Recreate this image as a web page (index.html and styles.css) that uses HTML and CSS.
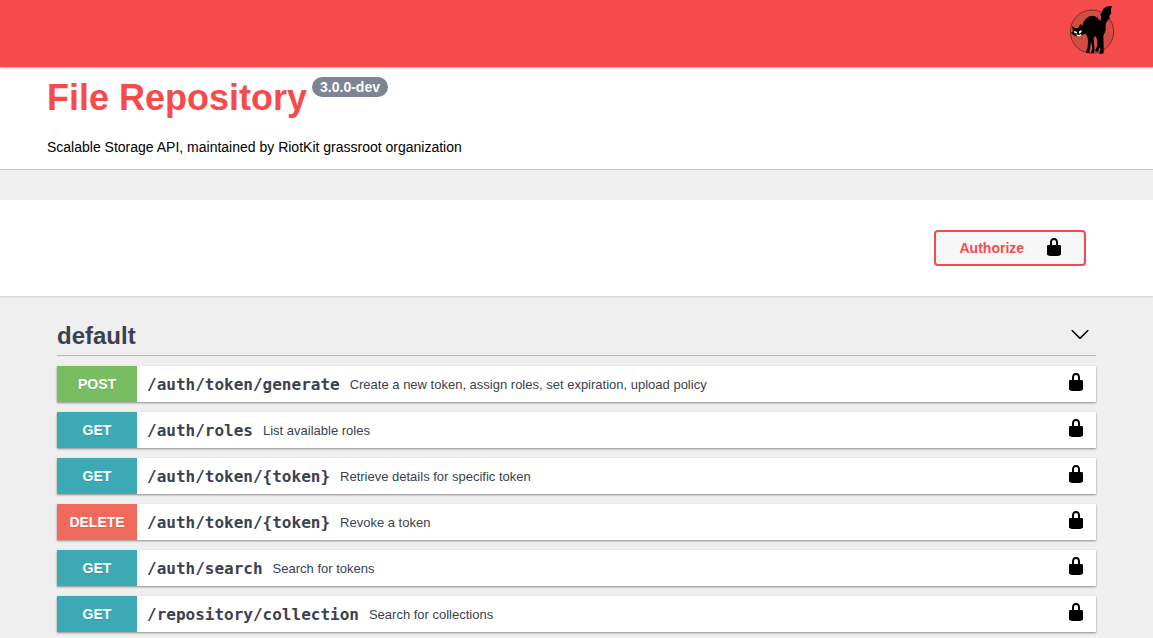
FILE: index.html
```html
<!DOCTYPE html>
<html lang="en">
<head>
<meta charset="utf-8">
<title>File Repository</title>
<link rel="stylesheet" href="styles.css">
</head>
<body>
<svg class="defs" width="0" height="0">
  <symbol id="lock" viewBox="0 0 20 20"><path d="M15.8 8H14V5.6C14 2.703 12.665 1 10 1 7.334 1 6 2.703 6 5.6V8H4c-.553 0-1 .646-1 1.199V17c0 .549.428 1.139.951 1.307l1.197.387C5.672 18.861 6.55 19 7.1 19h5.8c.549 0 1.428-.139 1.951-.307l1.196-.387c.524-.167.953-.757.953-1.306V9.199C17 8.646 16.352 8 15.8 8zM12 8H8V5.199C8 3.754 8.797 3 10 3c1.203 0 2 .754 2 2.199V8z"/></symbol>
</svg>
<header class="topbar">
  <svg class="logo" width="64" height="60" viewBox="0 0 192 180">
    <circle cx="96" cy="95" r="65" fill="#d44c42" stroke="#5e2422" stroke-width="2.400"/>
    <path d="M156 18L143 19L131 25L126 35L121 43L124 52L121 64L113 53L101 47L88 49L77 57L70 67L67 78L61 72L55 84L47 85L36 79L39 93L33 99L41 106L54 109L68 104L76 101L82 109L84 122L83 142L78 153L79 159L88 158L91 140L93 123L97 145L93 158L101 159L104 151L102 132L101 113L107 108L112 121L112 137L106 150L107 155L115 154L119 142L122 149L117 159L121 162L131 160L131 137L130 108L137 91L137 73L140 65L149 55L148 49L154 38L152 32Z"/>
    <path d="M42 92L51 96L50 101L43 98ZM56 95L64 90L65 96L58 101ZM48 103L56 105L65 101L61 109L52 109Z" fill="#fff"/>
    <path d="M44 109L53 111M64 109L67 118M56 114L63 119" fill="none" stroke="#7d5050" stroke-width="2.500"/>
  </svg>
</header>
<section class="info">
  <h1 class="title">File Repository<span class="version">3.0.0-dev</span></h1>
  <p class="description">Scalable Storage API, maintained by RiotKit grassroot organization</p>
</section>
<section class="scheme">
  <button class="authorize"><span>Authorize</span><svg class="icon"><use href="#lock"/></svg></button>
</section>
<main class="operations">
  <h2 class="tag"><span>default</span><svg class="icon" viewBox="0 0 20 20"><path d="M17.418 6.109c.272-.268.709-.268.979 0s.271.701 0 .969l-7.908 7.83c-.27.268-.707.268-.979 0l-7.908-7.83c-.27-.268-.27-.701 0-.969.271-.268.709-.268.979 0L10 13.250l7.418-7.141z"/></svg></h2>
  <div class="operation"><span class="method post">POST</span><span class="path">/auth/token/generate</span><span class="summary">Create a new token, assign roles, set expiration, upload policy</span><svg class="icon"><use href="#lock"/></svg></div>
  <div class="operation"><span class="method">GET</span><span class="path">/auth/roles</span><span class="summary">List available roles</span><svg class="icon"><use href="#lock"/></svg></div>
  <div class="operation"><span class="method">GET</span><span class="path">/auth/token/{token}</span><span class="summary">Retrieve details for specific token</span><svg class="icon"><use href="#lock"/></svg></div>
  <div class="operation"><span class="method delete">DELETE</span><span class="path">/auth/token/{token}</span><span class="summary">Revoke a token</span><svg class="icon"><use href="#lock"/></svg></div>
  <div class="operation"><span class="method">GET</span><span class="path">/auth/search</span><span class="summary">Search for tokens</span><svg class="icon"><use href="#lock"/></svg></div>
  <div class="operation"><span class="method">GET</span><span class="path">/repository/collection</span><span class="summary">Search for collections</span><svg class="icon"><use href="#lock"/></svg></div>
</main>
</body>
</html>
```
FILE: styles.css
```css
* { box-sizing: border-box; }
body {
  margin: 0;
  height: 638px;
  overflow: hidden;
  background: #efefef;
  font-family: "Liberation Sans", Arial, sans-serif;
  color: #3b4151;
}
.defs { position: absolute; }
.icon { width: 20px; height: 20px; flex: none; fill: #000; }
.topbar {
  position: relative;
  height: 67px;
  padding-right: 29px;
  display: flex;
  justify-content: flex-end;
  background: #f54c4b;
  box-shadow: 0 1px 2px rgba(0, 0, 0, .3);
}
.info {
  height: 103px;
  padding: 10px 47px 0;
  background: #fff;
  border-bottom: 1px solid #c8c8c8;
}
.title {
  display: flex;
  align-items: flex-start;
  margin: 0;
  font-size: 36px;
  line-height: 42px;
  color: #f54c4b;
}
.version {
  margin: 0 0 0 5px;
  padding: 0 8px;
  height: 20px;
  border-radius: 10px;
  background: #7d8492;
  color: #fff;
  font-size: 14px;
  line-height: 20px;
}
.description {
  margin: 20px 0 0;
  font-size: 14px;
  line-height: 16px;
  color: #000;
}
.scheme {
  height: 96px;
  margin-top: 30px;
  padding: 30px 67px;
  display: flex;
  justify-content: flex-end;
  background: #fff;
  box-shadow: 0 1px 2px rgba(0, 0, 0, .15);
}
.authorize {
  display: flex;
  align-items: center;
  justify-content: space-between;
  width: 152px;
  height: 36px;
  padding: 0 20px 0 23.5px;
  border: 2px solid #f54c4b;
  border-radius: 4px;
  background: #f7f7f7;
  color: #f54c4b;
  font: bold 14px "Liberation Sans", Arial, sans-serif;
}
.authorize .icon { margin-top: -2px; }
.operations { padding: 20px 57px 0; }
.tag {
  display: flex;
  justify-content: space-between;
  height: 40px;
  margin: 0 0 10px;
  padding: 6px 6px 0 0;
  border-bottom: 1px solid #b5b6b8;
  font-size: 24px;
  line-height: 28px;
}
.tag .icon { margin-top: 2px; }
.operation {
  display: flex;
  align-items: center;
  height: 36px;
  margin-bottom: 10px;
  padding-right: 10px;
  background: #fff;
  box-shadow: 0 1px 2px rgba(0, 0, 0, .42);
}
.operation .icon { margin: -4px 0 0 auto; }
.method {
  width: 80px;
  height: 36px;
  background: #3caab5;
  color: #fff;
  font-size: 14px;
  font-weight: bold;
  line-height: 36px;
  text-align: center;
  text-shadow: 0 1px 0 rgba(0, 0, 0, .1);
}
.post { background: #78bd62; }
.delete { background: #ef6a5a; }
.path {
  padding: 2px 10px 0;
  font: bold 16px/20px "DejaVu Sans Mono", monospace;
}
.summary { padding-top: 1px; font-size: 13px; }
```
